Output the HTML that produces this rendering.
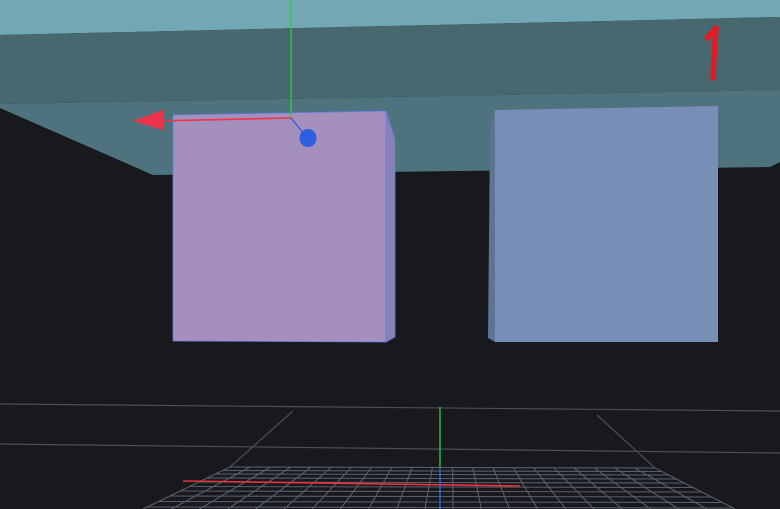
<!DOCTYPE html>
<html><head><meta charset="utf-8"><style>
html,body{margin:0;padding:0;background:#18191d;overflow:hidden}
svg{display:block}
</style></head><body>
<svg id="s" width="780" height="509" viewBox="0 0 780 509" xmlns="http://www.w3.org/2000/svg">
<rect width="780" height="509" fill="#18191d"/>
<polygon points="0,0 780,0 780,17 0,35" fill="#72a8b5"/>
<polygon points="0,35 780,17 780,90 0,104" fill="#486870"/>
<polygon points="0,104 780,90 780,162 770,167 153,175 0,108" fill="#4e737e"/>
<g stroke="#4a4e5a" stroke-width="1.2" fill="none">
<line x1="0" y1="404" x2="780" y2="411"/>
<line x1="0" y1="444" x2="780" y2="453"/>
<line x1="293" y1="411" x2="230" y2="467"/>
<line x1="597" y1="415" x2="655" y2="468"/>
</g>
<g id="grid" stroke="#5a5e6c" stroke-width="1.1" fill="none"></g>
<line x1="183" y1="481" x2="520" y2="486" stroke="#e8313f" stroke-width="1.6"/>
<line x1="440" y1="407" x2="440" y2="467" stroke="#2bd13a" stroke-width="1.3"/>
<line x1="440" y1="467" x2="440" y2="509" stroke="#3a6ae0" stroke-width="1.3"/>
<polygon points="386,111 395,140 395,337 386,342" fill="#8a80b2" stroke="#5d7fe0" stroke-width="0.8"/>
<polygon points="173,115 386,111 386,342 173,341" fill="#a48fbd" stroke="#5d7fe0" stroke-width="0.8"/>
<polygon points="495,110 490,130 488,338 495,342" fill="#5f7394"/>
<polygon points="495,110 718,106 718,342 495,342" fill="#778fb6"/>
<line x1="291" y1="0" x2="291" y2="118" stroke="#2bd13a" stroke-width="1.3"/>
<line x1="291" y1="118" x2="155" y2="121" stroke="#f0334a" stroke-width="1.6"/>
<polygon points="133,121 163,110 163,130" fill="#f0334a"/>
<line x1="291" y1="118" x2="305" y2="135" stroke="#2b5fe0" stroke-width="1.3"/>
<ellipse cx="308" cy="138" rx="8.5" ry="9" fill="#2b5fe0"/>
<path d="M707,38 L716,28 Q714,50 713,78" fill="none" stroke="#e11b23" stroke-width="5.5" stroke-linecap="round" stroke-linejoin="round"/>
</svg>
<script>
var g=document.getElementById('grid'),ns='http://www.w3.org/2000/svg';
function L(a,b,c,d){var l=document.createElementNS(ns,'line');l.setAttribute('x1',a);l.setAttribute('y1',b);l.setAttribute('x2',c);l.setAttribute('y2',d);g.appendChild(l);}
var n=21;
for(var i=0;i<=n;i++){var t=i/n;L(230+t*425,467+t*1,143+t*592,509);}
var ys=[467,470.5,474,478,482,486.5,491,496,501.5,507];
ys.forEach(function(y){var f=(y-467)/42;var xl=230-f*87,xr=655+f*80;L(xl,y,xr,y+1);});
</script>
</body></html>
